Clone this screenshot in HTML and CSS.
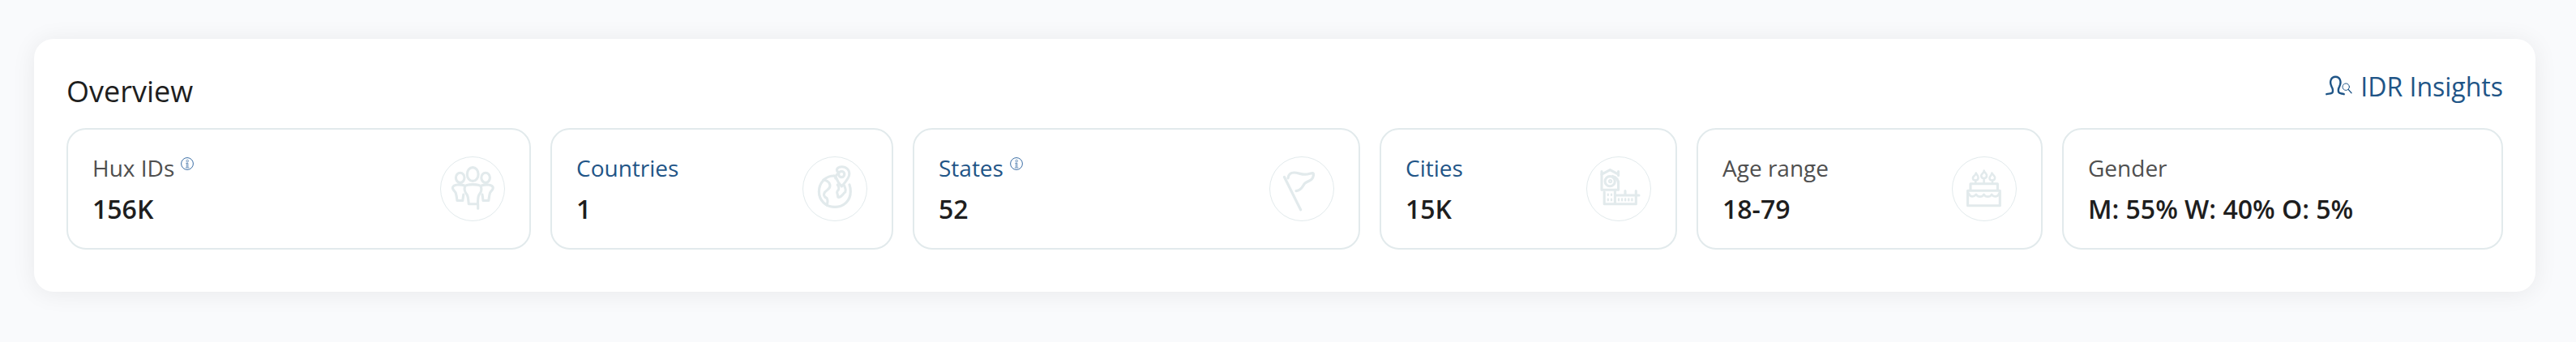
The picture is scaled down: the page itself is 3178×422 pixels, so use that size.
FILE: index.html
```html
<!DOCTYPE html>
<html lang="en">
<head>
<meta charset="utf-8">
<title>Overview</title>
<link rel="stylesheet" href="styles.css">
</head>
<body>
<main class="panel">
  <header class="panel-head">
    <h1 class="title">Overview</h1>
    <a class="insights">
      <svg class="insights-icon" viewBox="0 0 34 26" fill="none" stroke="currentColor" stroke-linecap="round">
        <path stroke-width="2.4" d="M1.3 23.2C5 22.4 8 22.6 8.6 21C9.6 18.2 9 16.4 7.4 13.6C4.6 8 6.6 1.8 12.3 1.8S20 8 17.2 13.6C15.6 16.4 15.4 18.4 16.2 20.8C17 22.6 19.6 22.2 22.7 23.2"/>
        <circle cx="25.2" cy="14.2" r="4.2" stroke-width="1"/>
        <path stroke-width="1.3" d="M28.3 17.6L32 21.7"/>
      </svg>
      <span>IDR Insights</span>
    </a>
  </header>
  <section class="cards">
    <article class="card hux">
      <div class="text">
        <div class="label">Hux IDs
          <svg class="info" viewBox="0 0 16 16" fill="none" stroke="currentColor"><circle cx="8" cy="8" r="7.4"/><circle cx="8.2" cy="4.6" r="1.3" stroke-width=".7"/><path stroke-width=".7" d="M6.3 7.3h2.6v5.2M7.3 7.3v5.2M5.8 12.9h4.6"/></svg>
        </div>
        <div class="value">156K</div>
      </div>
      <svg class="badge" viewBox="0 0 80 80">
        <circle class="ring" cx="40" cy="40" r="39.5"/>
        <ellipse cx="40.2" cy="22" rx="6.9" ry="8.4"/>
        <ellipse cx="24.7" cy="26.3" rx="5.3" ry="6.1"/>
        <ellipse cx="56.1" cy="26.3" rx="5.3" ry="6.1"/>
        <path d="M40.2 34.6C35 34.6 31.4 35 30.5 37.2C29.4 41 31 44.6 33 47C34.8 49.5 34.8 54 35.2 58.7H46.5C46.6 53 46.4 49.5 48.2 47C50.4 44.4 51.6 41 50.3 37.2C49.4 35 45.6 34.6 40.2 34.6Z"/>
        <path d="M46.7 58.7V64.3"/>
        <path d="M30 36C25 34.4 17 34.2 15.5 38.2C14.8 41 18 42.5 19.2 45C20.2 48 20.5 51.5 21 54.5H27.8L28.8 47"/>
        <path d="M51 36C56 34.4 63.6 34.2 65.2 38.2C65.9 41 62.6 42.5 61.5 45C60.5 48 60.3 51.5 59.8 54.5H53L52 47"/>
      </svg>
    </article>
    <article class="card countries">
      <div class="text">
        <div class="label link">Countries</div>
        <div class="value">1</div>
      </div>
      <svg class="badge" viewBox="0 0 80 80">
        <circle class="ring" cx="40" cy="40" r="39.5"/>
        <path stroke-width="3.2" d="M38.8 24C27.5 24 20.4 33.5 20.4 43.5C20.4 54.5 29 62.4 40 62.4C51 62.4 59.3 54.5 59.3 43.5C59.3 40 59 37.5 58 35"/>
        <path d="M38.8 24C40.5 24 40.6 25.4 40.8 27"/>
        <path d="M48.3 37C43.8 32.5 42.3 28.5 41 25C41 22.5 45.5 21 43.8 18.8C42.8 18.8 42.1 17.4 42.6 15.6C43.8 13.3 46 12.7 48.7 12.7C54 12.7 57.8 16.5 57.8 21.6C57.8 27.5 53 31 48.3 37Z"/>
        <circle cx="48.2" cy="22" r="3.6"/>
        <path d="M25.8 29C29 29 33.5 31.5 33.8 35C35.2 40 30 41 27.3 44.5C25.8 47.5 26.5 50 30 51.5C31.5 54 31 57.5 30 60"/>
        <path d="M43.2 35C45.8 38.5 45.3 40.5 43 43C41.7 45 43.8 46 43.8 50.3C48.5 51 50 45.5 52.8 44C54.5 40.5 52 38.5 51.7 36.2"/>
      </svg>
    </article>
    <article class="card states">
      <div class="text">
        <div class="label link">States
          <svg class="info" viewBox="0 0 16 16" fill="none" stroke="currentColor"><circle cx="8" cy="8" r="7.4"/><circle cx="8.2" cy="4.6" r="1.3" stroke-width=".7"/><path stroke-width=".7" d="M6.3 7.3h2.6v5.2M7.3 7.3v5.2M5.8 12.9h4.6"/></svg>
        </div>
        <div class="value">52</div>
      </div>
      <svg class="badge" viewBox="0 0 80 80">
        <circle class="ring" cx="40" cy="40" r="39.5"/>
        <path stroke-width="3.2" d="M18.5 25.5L38.6 65.8"/>
        <path stroke-width="3.2" d="M23 26.8C23.5 23 26 20 30.5 20C36 20 38.5 22.4 44.5 22.2C48.5 22.2 51 20.4 53.4 20.6C55.4 21 54.4 25.6 52.4 28C50.5 30.4 46 31 43.6 33.4C41 36 40.4 41.8 33 42.6"/>
      </svg>
    </article>
    <article class="card cities">
      <div class="text">
        <div class="label link">Cities</div>
        <div class="value">15K</div>
      </div>
      <svg class="badge" viewBox="0 0 80 80">
        <circle class="ring" cx="40" cy="40" r="39.5"/>
        <path d="M19 18.5V41.3H39.6V34C39.6 29 37 25.5 32.6 24.4"/>
        <path d="M39.6 18.5V23.5M19 22.2L29.3 16.6L39.6 22.2M39.6 34V31"/>
        <circle cx="29.2" cy="30.7" r="6.1"/>
        <circle cx="29.6" cy="30.6" r="1.6" stroke-width="2"/>
        <path d="M22.2 44V58.8H61.3V42.5M35.4 41.3V58.8M35.4 48H65M48 42.5V48"/>
        <path stroke-width="2.3" d="M26.8 46.7v1.2M31 46.7v1.2M26.8 52.7v1.6M31 52.7v1.6M40 52.4v2M44.1 52.4v2M48.2 52.4v2M52.3 52.4v2M56.4 52.4v2"/>
      </svg>
    </article>
    <article class="card age">
      <div class="text">
        <div class="label">Age range</div>
        <div class="value">18-79</div>
      </div>
      <svg class="badge" viewBox="0 0 80 80">
        <circle class="ring" cx="40" cy="40" r="39.5"/>
        <path d="M19.6 42.3H59.3V60.7H19.6ZM23 42.3V33.7H56.4V42.3"/>
        <path stroke-width="2.6" d="M21 45.8C22 50.2 27.3 50.6 30 46.8C32 50.6 37.4 50.6 39.5 46.8C41.6 50.6 47 50.6 49.2 46.8C51.5 50.6 57 50.2 58.2 45.8"/>
        <path stroke-width="2.5" d="M29.3 33V29.6M39.6 33V27.2M50 33V29.6"/>
        <path stroke-width="2.5" d="M29.8 20.4C30 22.2 32.8 23.6 32.6 26.4C32.4 28.6 31 29.6 29.2 29.6C27.2 29.6 25.9 28.2 25.9 26.5C25.9 24.2 29.4 23.8 29.8 20.4ZM39.7 17.6C40 19.6 43 21 43 23.6C43 25.8 41.4 27.1 39.6 27.1C37.6 27.1 36.2 25.8 36.2 23.8C36.2 21.4 39.6 21 39.7 17.6ZM49.4 20.4C49.6 22.2 53 23.6 53.2 26.4C53 28.6 51.6 29.6 49.8 29.6C47.8 29.6 46.5 28.2 46.5 26.5C46.5 24.2 49.2 23.8 49.4 20.4Z"/>
      </svg>
    </article>
    <article class="card gender">
      <div class="text">
        <div class="label">Gender</div>
        <div class="value">M: 55% W: 40% O: 5%</div>
      </div>
    </article>
  </section>
</main>
</body>
</html>
```

FILE: styles.css
```css
* { box-sizing: border-box; }

body {
  margin: 0;
  height: 422px;
  padding: 48px 50px 62px 42px;
  background: #f9fafc;
  font-family: "Open Sans", "Noto Sans", sans-serif;
  color: #1e1e1e;
}

.panel {
  height: 312px;
  padding: 37px 40px 52px;
  border-radius: 24px;
  background: #fff;
  box-shadow: 0 2px 30px rgba(0, 0, 0, 0.07);
}

.panel-head {
  display: flex;
  justify-content: space-between;
  align-items: flex-start;
  height: 73px;
}

.title {
  margin: 3px 0 0;
  font-size: 36px;
  line-height: 49px;
  font-weight: 400;
}

.insights {
  display: flex;
  align-items: flex-start;
  gap: 9px;
  font-size: 32px;
  line-height: 44px;
  color: #1f5587;
}

.insights-icon {
  width: 34px;
  height: 26px;
  margin-top: 8px;
}

.cards {
  display: grid;
  grid-template-columns: 573fr 423fr 552fr 367fr 427fr 544fr;
  column-gap: 24px;
  height: 150px;
}

.card {
  display: flex;
  justify-content: space-between;
  align-items: center;
  min-width: 0;
  padding: 0 30px;
  border: 2px solid #e2eaec;
  border-radius: 24px;
}

.label {
  display: flex;
  gap: 8px;
  margin-bottom: 10px;
  font-size: 28px;
  line-height: 38px;
  color: #4f4f4f;
}

.link { color: #1f5587; }

.info {
  width: 16px;
  height: 16px;
  margin-top: 6px;
  color: #3b6ea5;
}

.value {
  font-size: 32px;
  line-height: 44px;
  font-weight: 600;
  white-space: nowrap;
}

.text { padding-top: 2px; }

.badge {
  flex: none;
  width: 80px;
  height: 80px;
  fill: none;
  stroke: #e2eaec;
  stroke-width: 3.1;
  stroke-linecap: round;
  stroke-linejoin: round;
}

.ring { stroke-width: 1; }
```
